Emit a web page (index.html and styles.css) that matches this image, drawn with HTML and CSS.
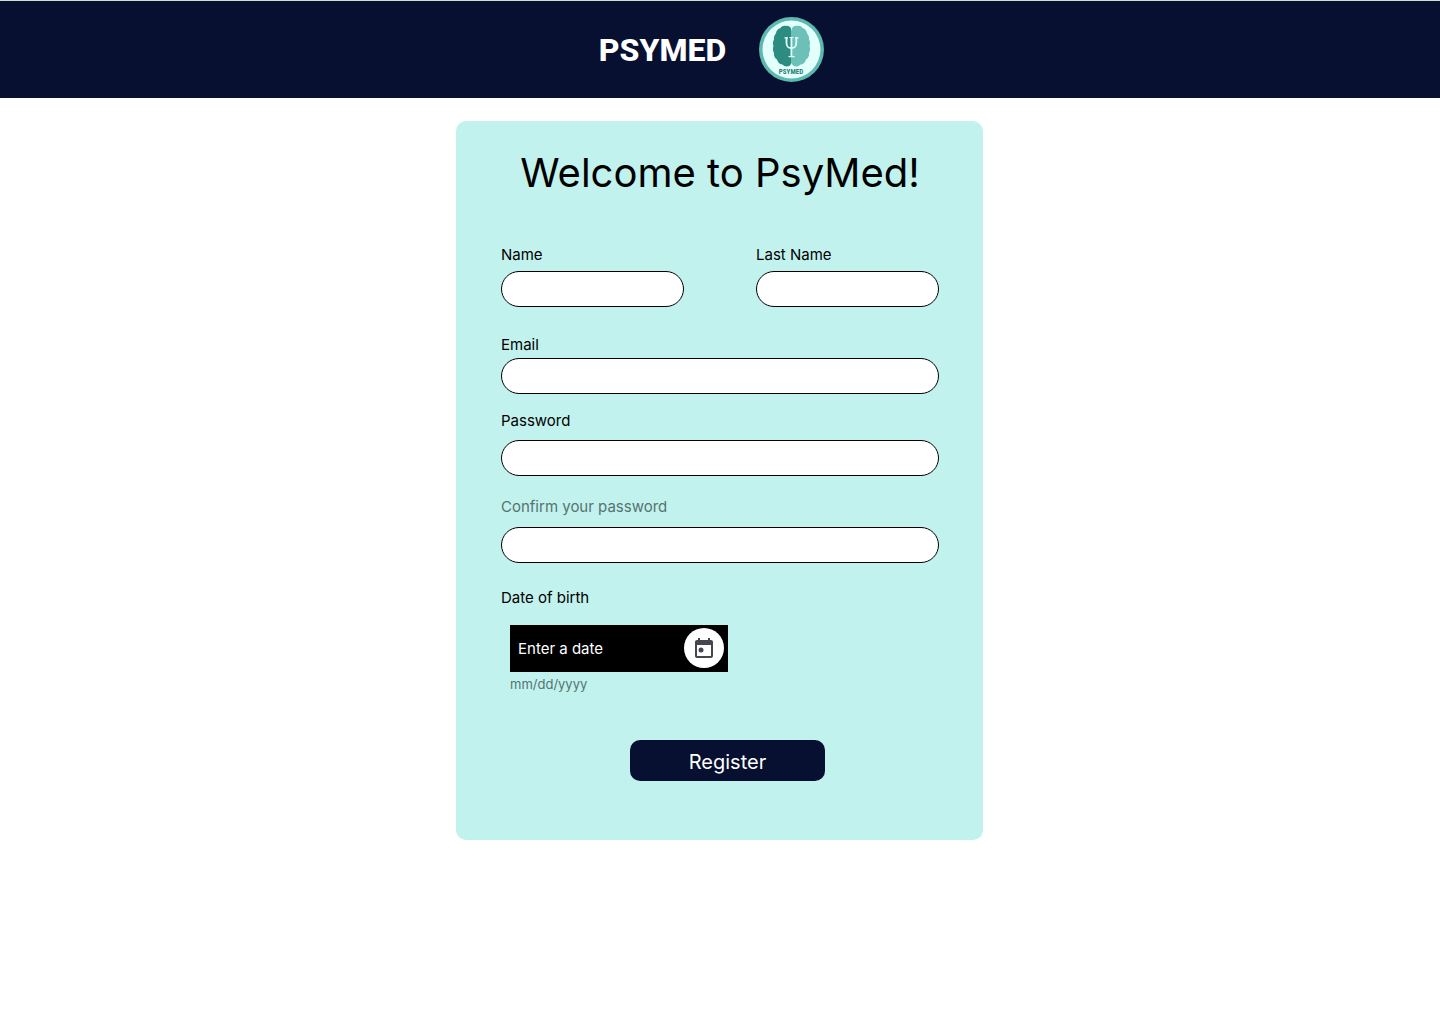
FILE: index.html
```html
<!DOCTYPE html>
<html lang="en">
<head>
<meta charset="utf-8">
<meta name="viewport" content="width=device-width, initial-scale=1">
<title>PsyMed - Register</title>
<link rel="stylesheet" href="styles.css">
</head>
<body>
<header class="site-header">
  <span class="brand">PSYMED</span>
  <svg class="logo" viewBox="0 0 65 65" role="img" aria-label="PsyMed logo">
    <circle cx="32.500" cy="32.500" r="32.500" fill="#5db8ae"/>
    <circle cx="32.500" cy="32.500" r="29" fill="#e3fffb"/>
    <path fill="#2c8c82" d="M32 11.500c-1-2-3-3-5-2.500c-2.500-.5-4.500.5-5.500 2c-2.500.5-4.500 3-4.500 5.500c-1.500 1.500-2.500 4-2 6c-1.200 2-1.300 4.500-.5 6.500c-1 2.500-.6 5 .5 7c-.3 3 1 5.500 3 6.500c.8 3 3 5 5.500 5c2 2.500 6.500 3 8.500-.5z"/>
    <path fill="#6cc0b7" d="M33 11.500c1-2 3-3 5-2.500c2.500-.5 4.500.5 5.500 2c2.500.5 4.500 3 4.500 5.500c1.500 1.500 2.500 4 2 6c1.200 2 1.300 4.500.5 6.500c1 2.500.6 5-.5 7c.3 3-1 5.500-3 6.500c-.8 3-3 5-5.500 5c-2 2.500-6.500 3-8.500-.5l-1-1V14z"/>
    <path fill="none" stroke="#e3fffb" stroke-width="1.800" d="M27.500 20.500v5c0 4 1 5.500 4.900 5.500s4.900-1.500 4.900-5.500v-5M32.400 20v20"/>
    <path fill="none" stroke="#e3fffb" stroke-width="1.200" d="M25.500 20.800h3.500M36 20.800h3.500M30.500 20.500h4M29.500 39.700h6"/>
    <text class="logo-text" x="32" y="57" text-anchor="middle">PSYMED</text>
  </svg>
</header>
<main class="page">
  <form class="card">
    <h1 class="title">Welcome to PsyMed!</h1>
    <div class="name-row">
      <div class="field field-name">
        <label for="first-name">Name</label>
        <input class="pill" id="first-name" type="text">
      </div>
      <div class="field field-name">
        <label for="last-name">Last Name</label>
        <input class="pill" id="last-name" type="text">
      </div>
    </div>
    <div class="field field-email">
      <label for="email">Email</label>
      <input class="pill" id="email" type="email">
    </div>
    <div class="field field-password">
      <label for="password">Password</label>
      <input class="pill" id="password" type="password">
    </div>
    <div class="field field-confirm">
      <label class="muted" for="confirm">Confirm your password</label>
      <input class="pill" id="confirm" type="password">
    </div>
    <div class="field field-birth">
      <label for="birth">Date of birth</label>
      <div class="date-group">
        <div class="date-box">
          <input class="date-input" id="birth" type="text" placeholder="Enter a date" aria-describedby="birth-hint">
          <button class="date-button" type="button" aria-label="Open calendar">
            <svg width="24" height="24" viewBox="0 0 24 24" aria-hidden="true"><path fill="#49454f" d="M19 4h-1V2h-2v2H8V2H6v2H5c-1.110 0-1.990.9-1.990 2L3 20c0 1.100.89 2 2 2h14c1.100 0 2-.9 2-2V6c0-1.100-.9-2-2-2zm0 16H5V9h14v11z"/><circle cx="9" cy="14" r="2.500" fill="#49454f"/></svg>
          </button>
        </div>
        <p class="hint" id="birth-hint">mm/dd/yyyy</p>
      </div>
    </div>
    <div class="actions"><button class="register" type="submit">Register</button></div>
  </form>
</main>
</body>
</html>
```
FILE: styles.css
```css
* { box-sizing: border-box; }
body {
  margin: 0;
  background: #fff;
  color: #000;
  font-family: Inter, sans-serif;
  font-size: 15px;
  line-height: 18px;
}
input, button { font: inherit; }

.site-header {
  display: flex;
  align-items: center;
  justify-content: center;
  gap: 33px;
  padding: 16px 17px 16px 0;
  border-top: 1px solid #d5dcd8;
  background: #071030;
}
.brand {
  color: #fff;
  font-family: Roboto, sans-serif;
  font-size: 32px;
  font-weight: 800;
  line-height: 40px;
}
.logo { width: 65px; height: 65px; }
.logo-text {
  fill: #2c7c78;
  font-family: "Roboto Condensed", "Liberation Sans Narrow", Roboto, sans-serif;
  font-size: 7px;
  font-weight: 700;
}

.page { padding: 23px 17px 23px 16px; }
.card {
  max-width: 527px;
  margin: 0 auto;
  padding: 28px 44px 59px 45px;
  border-radius: 10px;
  background: #c2f2ed;
}
.title {
  margin: 0 0 49px;
  font-size: 40px;
  font-weight: 400;
  line-height: 48px;
  text-align: center;
}
.name-row {
  display: flex;
  justify-content: space-between;
  gap: 72px;
}
.field {
  display: flex;
  flex-direction: column;
}
.field-name { flex: 1; min-width: 0; gap: 7px; }
.field-email { margin-top: 29px; gap: 4px; }
.field-password { margin-top: 18px; gap: 10px; }
.field-confirm { margin-top: 22px; gap: 11px; }
.field-birth { margin-top: 26px; gap: 18px; }
.muted { color: #547471; }
.pill {
  width: 100%;
  height: 36px;
  padding: 0 16px;
  border: 1px solid #000;
  border-radius: 18px;
  background: #fff;
}

.date-group { padding-left: 9px; }
.date-box {
  display: flex;
  align-items: center;
  max-width: 218px;
  padding: 3px 4px 4px 8px;
  background: #000;
}
.date-input {
  flex: 1;
  min-width: 0;
  padding: 2px 0 0;
  border: 0;
  background: transparent;
  color: #fff;
}
.date-input::placeholder { color: #fff; opacity: 1; }
.date-button {
  display: grid;
  place-items: center;
  width: 40px;
  height: 40px;
  padding: 0;
  border: 0;
  border-radius: 50%;
  background: #fff;
}
.hint {
  margin: 4px 0 0;
  color: #547471;
  font-size: 13px;
  line-height: 16px;
}

.actions {
  display: flex;
  justify-content: center;
  margin-top: 48px;
  padding-left: 15px;
}
.register {
  width: 195px;
  padding: 10px 0 7px;
  border: 0;
  border-radius: 10px;
  background: #071030;
  color: #fff;
  font-size: 20px;
  line-height: 24px;
}
```
